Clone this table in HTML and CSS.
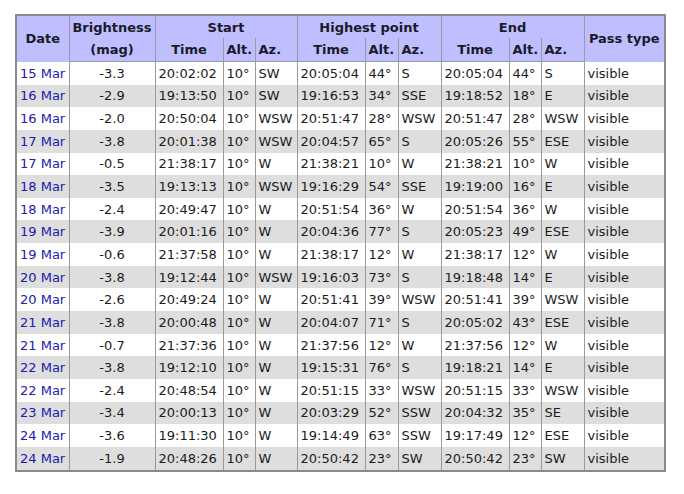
FILE: index.html
```html
<!DOCTYPE html>
<html>
<head>
<meta charset="utf-8">
<link rel="stylesheet" href="styles.css">
</head>
<body>
<table class="passes">
<colgroup>
<col class="c-date"><col class="c-mag">
<col class="c-time"><col class="c-alt"><col class="c-az">
<col class="c-time"><col class="c-alt2"><col class="c-az2">
<col class="c-time"><col class="c-alt"><col class="c-az2">
<col class="c-type">
</colgroup>
<thead>
<tr class="h1"><th rowspan="2">Date</th><th>Brightness</th><th colspan="3">Start</th><th colspan="3">Highest point</th><th colspan="3">End</th><th rowspan="2">Pass type</th></tr>
<tr class="h2"><th>(mag)</th><th>Time</th><th class="l">Alt.</th><th class="l">Az.</th><th>Time</th><th class="l">Alt.</th><th class="l">Az.</th><th>Time</th><th class="l">Alt.</th><th class="l">Az.</th></tr>
</thead>
<tbody>
<tr><td class="d">15 Mar</td><td class="m">-3.3</td><td>20:02:02</td><td>10°</td><td>SW</td><td>20:05:04</td><td>44°</td><td>S</td><td>20:05:04</td><td>44°</td><td>S</td><td>visible</td></tr>
<tr><td class="d">16 Mar</td><td class="m">-2.9</td><td>19:13:50</td><td>10°</td><td>SW</td><td>19:16:53</td><td>34°</td><td>SSE</td><td>19:18:52</td><td>18°</td><td>E</td><td>visible</td></tr>
<tr><td class="d">16 Mar</td><td class="m">-2.0</td><td>20:50:04</td><td>10°</td><td>WSW</td><td>20:51:47</td><td>28°</td><td>WSW</td><td>20:51:47</td><td>28°</td><td>WSW</td><td>visible</td></tr>
<tr><td class="d">17 Mar</td><td class="m">-3.8</td><td>20:01:38</td><td>10°</td><td>WSW</td><td>20:04:57</td><td>65°</td><td>S</td><td>20:05:26</td><td>55°</td><td>ESE</td><td>visible</td></tr>
<tr><td class="d">17 Mar</td><td class="m">-0.5</td><td>21:38:17</td><td>10°</td><td>W</td><td>21:38:21</td><td>10°</td><td>W</td><td>21:38:21</td><td>10°</td><td>W</td><td>visible</td></tr>
<tr><td class="d">18 Mar</td><td class="m">-3.5</td><td>19:13:13</td><td>10°</td><td>WSW</td><td>19:16:29</td><td>54°</td><td>SSE</td><td>19:19:00</td><td>16°</td><td>E</td><td>visible</td></tr>
<tr><td class="d">18 Mar</td><td class="m">-2.4</td><td>20:49:47</td><td>10°</td><td>W</td><td>20:51:54</td><td>36°</td><td>W</td><td>20:51:54</td><td>36°</td><td>W</td><td>visible</td></tr>
<tr><td class="d">19 Mar</td><td class="m">-3.9</td><td>20:01:16</td><td>10°</td><td>W</td><td>20:04:36</td><td>77°</td><td>S</td><td>20:05:23</td><td>49°</td><td>ESE</td><td>visible</td></tr>
<tr><td class="d">19 Mar</td><td class="m">-0.6</td><td>21:37:58</td><td>10°</td><td>W</td><td>21:38:17</td><td>12°</td><td>W</td><td>21:38:17</td><td>12°</td><td>W</td><td>visible</td></tr>
<tr><td class="d">20 Mar</td><td class="m">-3.8</td><td>19:12:44</td><td>10°</td><td>WSW</td><td>19:16:03</td><td>73°</td><td>S</td><td>19:18:48</td><td>14°</td><td>E</td><td>visible</td></tr>
<tr><td class="d">20 Mar</td><td class="m">-2.6</td><td>20:49:24</td><td>10°</td><td>W</td><td>20:51:41</td><td>39°</td><td>WSW</td><td>20:51:41</td><td>39°</td><td>WSW</td><td>visible</td></tr>
<tr><td class="d">21 Mar</td><td class="m">-3.8</td><td>20:00:48</td><td>10°</td><td>W</td><td>20:04:07</td><td>71°</td><td>S</td><td>20:05:02</td><td>43°</td><td>ESE</td><td>visible</td></tr>
<tr><td class="d">21 Mar</td><td class="m">-0.7</td><td>21:37:36</td><td>10°</td><td>W</td><td>21:37:56</td><td>12°</td><td>W</td><td>21:37:56</td><td>12°</td><td>W</td><td>visible</td></tr>
<tr><td class="d">22 Mar</td><td class="m">-3.8</td><td>19:12:10</td><td>10°</td><td>W</td><td>19:15:31</td><td>76°</td><td>S</td><td>19:18:21</td><td>14°</td><td>E</td><td>visible</td></tr>
<tr><td class="d">22 Mar</td><td class="m">-2.4</td><td>20:48:54</td><td>10°</td><td>W</td><td>20:51:15</td><td>33°</td><td>WSW</td><td>20:51:15</td><td>33°</td><td>WSW</td><td>visible</td></tr>
<tr><td class="d">23 Mar</td><td class="m">-3.4</td><td>20:00:13</td><td>10°</td><td>W</td><td>20:03:29</td><td>52°</td><td>SSW</td><td>20:04:32</td><td>35°</td><td>SE</td><td>visible</td></tr>
<tr><td class="d">24 Mar</td><td class="m">-3.6</td><td>19:11:30</td><td>10°</td><td>W</td><td>19:14:49</td><td>63°</td><td>SSW</td><td>19:17:49</td><td>12°</td><td>ESE</td><td>visible</td></tr>
<tr><td class="d">24 Mar</td><td class="m">-1.9</td><td>20:48:26</td><td>10°</td><td>W</td><td>20:50:42</td><td>23°</td><td>SW</td><td>20:50:42</td><td>23°</td><td>SW</td><td>visible</td></tr>
</tbody>
</table>
</body>
</html>
```
FILE: styles.css
```css
html, body {
  margin: 0;
  background: #ffffff;
}
body {
  padding: 14px 0 0 15px;
  font-family: "DejaVu Sans", Verdana, sans-serif;
  font-size: 13px;
  color: #1c1c1c;
}
.passes {
  border-collapse: collapse;
  table-layout: fixed;
  width: 649px;
  border: 2px solid #8a8a8a;
}
.c-date { width: 53px; }
.c-mag { width: 86px; }
.c-time { width: 68px; }
.c-alt { width: 32px; }
.c-alt2 { width: 33px; }
.c-az { width: 42px; }
.c-az2 { width: 43px; }
.c-type { width: 81px; }
.passes th {
  background: #bfbfff;
  font-weight: bold;
  color: #1a1a2a;
  border: 1px solid #9a9aa8;
  padding: 0;
  text-align: center;
  white-space: nowrap;
}
.passes tr.h1 th {
  height: 22px;
  border-bottom: none;
}
.passes tr.h2 th {
  height: 23px;
  border-top: none;
}
.passes tr.h2 th.l {
  text-align: left;
  padding-left: 3px;
}
.passes th[rowspan] {
  border-bottom: 1px solid #9a9aa8;
}
.passes td {
  height: 22.65px;
  padding: 0 0 0 3px;
  border: 1px solid #9a9a9a;
  border-top: none;
  border-bottom: none;
  white-space: nowrap;
  text-align: left;
}
.passes tbody tr:nth-child(even) td {
  background: #dedede;
}
.passes td.d {
  color: #2020b0;
}
.passes td.m {
  text-align: center;
  padding-left: 0;
}
```
